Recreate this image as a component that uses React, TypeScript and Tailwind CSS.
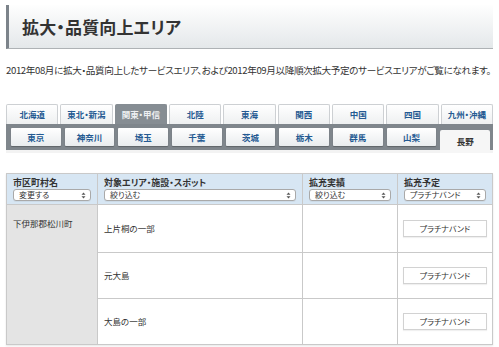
const FONT = "font-['Noto_Sans_CJK_JP','Noto_Sans',sans-serif]";

const AREAS = ["北海道", "東北・新潟", "関東・甲信", "北陸", "東海", "関西", "中国", "四国", "九州・沖縄"];
const PREFS = ["東京", "神奈川", "埼玉", "千葉", "茨城", "栃木", "群馬", "山梨", "長野"];

const ROWS = [
  { spot: "上片桐の一部", h: "h-[48px]" },
  { spot: "元大島", h: "h-[46px]" },
  { spot: "大島の一部", h: "h-[45px]" },
];

const Arrows = () => (
  <svg width="5" height="7" viewBox="0 0 5 7" className="shrink-0">
    <path d="M2.5 0.5 L4.5 2.8 H0.5 Z" fill="#555" />
    <path d="M2.5 6.5 L4.5 4.2 H0.5 Z" fill="#555" />
  </svg>
);

const Select = ({ label }: { label: string }) => (
  <div className="h-[12px] flex items-center justify-between rounded-[3px] border border-[#a9a9a9] bg-white pl-[5px] pr-[4px] text-[8px] leading-none text-[#333] shadow-[0_1px_0_rgba(0,0,0,0.05)]">
    <span>{label}</span>
    <Arrows />
  </div>
);

export default function App() {
  return (
    <div className={`w-[499px] h-[347px] bg-white overflow-hidden px-[6px] ${FONT} [font-feature-settings:'palt']`}>
      {/* Title bar */}
      <div className="mt-[5px] h-[44px] flex items-center border-l-[3px] border-[#7c838a] border-b border-b-[#aeb2b5] bg-gradient-to-b from-[#fefefe] to-[#e4e8ea] pl-[13px]">
        <h1 className="text-[17px] font-bold text-[#333] tracking-[0.01em]">拡大・品質向上エリア</h1>
      </div>

      <p className="mt-[15px] text-[9.6px] leading-[12px] tracking-[-0.04em] text-[#333] whitespace-nowrap">
        2012年08月に拡大・品質向上したサービスエリア、および2012年09月以降順次拡大予定のサービスエリアがご覧になれます。
      </p>

      {/* Tabs */}
      <div className="mt-[28px]">
        <div className="flex gap-[2px] h-[20px]">
          {AREAS.map((a) => {
            const on = a === "関東・甲信";
            return (
              <div
                key={a}
                className={`flex-1 flex items-center justify-center rounded-t-[2px] text-[8.5px] font-bold ${
                  on
                    ? "bg-[#868d93] text-[#eef0f2] border border-[#868d93] border-b-0"
                    : "bg-gradient-to-b from-white to-[#eef0f1] text-[#245a92] border border-[#cdd0d3] border-b-0"
                }`}
              >
                {a}
              </div>
            );
          })}
        </div>
        <div className="h-[26px] bg-[#7f868c] flex items-end gap-[4px] pl-[5px] pr-[3px]">
          {PREFS.map((p) => {
            const on = p === "長野";
            return on ? (
              <div key={p} className="flex-1 h-[23px] mb-[-3px] bg-[#f6f6f6] rounded-t-[2px] flex items-center justify-center text-[8.5px] font-bold text-[#333]">
                {p}
              </div>
            ) : (
              <div key={p} className="flex-1 h-[18px] mb-[4px] bg-gradient-to-b from-white to-[#e9ecee] rounded-[1px] flex items-center justify-center text-[8.5px] font-bold text-[#245a92] shadow-[0_1px_1px_rgba(0,0,0,0.25)]">
                {p}
              </div>
            );
          })}
        </div>
        <div className="h-[3px] bg-[#f3f3f3]" />
      </div>

      {/* Table */}
      <div className="mt-[20px] border border-[#c9c9c9] shadow-[0_1px_2px_rgba(0,0,0,0.1)]">
        <div className="flex h-[31px] bg-[#d7e6f3] border-b border-[#c9c9c9]">
          <div className="w-[91px] px-[6px] pt-[3px] border-r border-[#c9c9c9]">
            <div className="text-[9px] font-bold text-[#333] leading-[11px] mb-[1px]">市区町村名</div>
            <Select label="変更する" />
          </div>
          <div className="w-[205px] px-[6px] pt-[3px] border-r border-[#c9c9c9]">
            <div className="text-[9px] font-bold text-[#333] leading-[11px] mb-[1px]">対象エリア・施設・スポット</div>
            <Select label="絞り込む" />
          </div>
          <div className="w-[95px] px-[6px] pt-[3px] border-r border-[#c9c9c9]">
            <div className="text-[9px] font-bold text-[#333] leading-[11px] mb-[1px]">拡充実績</div>
            <Select label="絞り込む" />
          </div>
          <div className="flex-1 px-[6px] pt-[3px]">
            <div className="text-[9px] font-bold text-[#333] leading-[11px] mb-[1px]">拡充予定</div>
            <Select label="プラチナバンド" />
          </div>
        </div>
        <div className="flex">
          <div className="w-[91px] bg-[#e4e4e4] border-r border-[#c9c9c9] px-[6px] pt-[12px] text-[8.5px] text-[#333]">
            下伊那郡松川町
          </div>
          <div className="flex-1">
            {ROWS.map((r, i) => (
              <div key={r.spot} className={`flex ${r.h} ${i < ROWS.length - 1 ? "border-b border-[#c9c9c9]" : ""}`}>
                <div className="w-[205px] border-r border-[#c9c9c9] px-[6px] flex items-center text-[8.5px] text-[#333]">
                  {r.spot}
                </div>
                <div className="w-[95px] border-r border-[#c9c9c9]" />
                <div className="flex-1 flex items-center justify-center">
                  <div className="w-[84px] h-[17px] border border-[#d2d2d2] bg-white flex items-center justify-center text-[8px] text-[#333] shadow-[0_1px_1px_rgba(0,0,0,0.06)]">
                    プラチナバンド
                  </div>
                </div>
              </div>
            ))}
          </div>
        </div>
      </div>
    </div>
  );
}
